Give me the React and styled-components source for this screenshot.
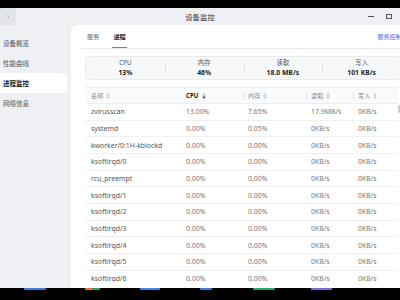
import React from "react";
import styled, { createGlobalStyle } from "styled-components";

const GlobalStyle = createGlobalStyle`
  * { box-sizing: border-box; }
  html, body {
    margin: 0;
    width: 400px;
    height: 300px;
    overflow: hidden;
    background: #000;
    font-family: "Noto Sans", "Noto Sans CJK SC", sans-serif;
  }
`;

const Screen = styled.div`
  width: 400px;
  height: 300px;
  display: flex;
  flex-direction: column;
  background: #000;
  overflow: hidden;
`;

const TopStrip = styled.div`
  height: 8px;
  flex: none;
`;

const Window = styled.div`
  height: 280px;
  flex: none;
  display: flex;
  flex-direction: column;
  background: #eef0f4;
`;

const TitleBar = styled.div`
  height: 17px;
  flex: none;
  display: grid;
  grid-template-columns: 1fr auto 1fr;
  align-items: center;
`;

const BackButton = styled.div`
  width: 16px;
  height: 17px;
  background: #e2e5ea;
  display: flex;
  align-items: center;
  justify-content: center;
`;

const Title = styled.div`
  font-size: 7.3px;
  color: #333;
  letter-spacing: 0.1px;
`;

const Controls = styled.div`
  justify-self: end;
  display: flex;
  align-items: center;
  gap: 12px;
  padding-right: 8px;
`;

const Minimize = styled.span`
  width: 6px;
  height: 1px;
  background: #555;
`;

const Maximize = styled.span`
  width: 6px;
  height: 5px;
  border: 1px solid #555;
`;

const Body = styled.div`
  flex: 1;
  display: flex;
  min-height: 0;
`;

const Sidebar = styled.div`
  width: 71px;
  flex: none;
  padding-top: 8px;
  display: flex;
  flex-direction: column;
`;

const NavItem = styled.div`
  width: 67px;
  height: 20px;
  display: flex;
  align-items: center;
  padding-left: 3px;
  font-size: 6.5px;
  color: ${(p) => (p.$active ? "#222" : "#555")};
  font-weight: ${(p) => (p.$active ? 600 : 400)};
  background: ${(p) => (p.$active ? "#fff" : "transparent")};
  border-radius: 0 4px 4px 0;
`;

const Panel = styled.div`
  flex: 1;
  background: #fff;
  border-top-left-radius: 6px;
  display: flex;
  flex-direction: column;
  overflow: hidden;
  padding-bottom: 6px;
`;

const TabBar = styled.div`
  height: 24px;
  flex: none;
  margin-left: 10px;
  padding-left: 5px;
  display: flex;
  align-items: stretch;
  gap: 12px;
  border-bottom: 1px solid #e9eaee;
  white-space: nowrap;
`;

const Tab = styled.div`
  position: relative;
  display: flex;
  align-items: center;
  padding: 0 1px;
  font-size: 6.2px;
  color: ${(p) => (p.$active ? "#222" : "#666")};
  font-weight: ${(p) => (p.$active ? 600 : 400)};
  &::after {
    content: "";
    display: ${(p) => (p.$active ? "block" : "none")};
    position: absolute;
    left: 0;
    right: 0;
    bottom: 0;
    height: 1.5px;
    background: #5b7cf5;
  }
`;

const Link = styled.div`
  margin-left: auto;
  margin-right: -2px;
  display: flex;
  align-items: center;
  font-size: 6.2px;
  color: #5a6cf0;
`;

const Content = styled.div`
  flex: 1;
  min-height: 0;
  padding: 7px 0 0 14px;
  display: flex;
  flex-direction: column;
  gap: 7px;
`;

const StatsBox = styled.div`
  width: 317px;
  height: 24px;
  flex: none;
  display: grid;
  grid-template-columns: repeat(4, 1fr);
  background: #f7f8fa;
  border: 1px solid #e8eaee;
  border-radius: 4px;
`;

const Stat = styled.div`
  position: relative;
  display: flex;
  flex-direction: column;
  align-items: center;
  justify-content: center;
  line-height: 10px;
  & + &::before {
    content: "";
    position: absolute;
    left: 0;
    top: 6px;
    height: 9px;
    width: 1px;
    background: #dfe1e6;
  }
`;

const StatLabel = styled.span`
  font-size: 6.3px;
  color: #555;
`;

const StatValue = styled.span`
  font-size: 6.8px;
  font-weight: 700;
  color: #222;
`;

const TableWrap = styled.div`
  flex: 1;
  min-height: 0;
  display: flex;
  overflow: hidden;
`;

const Table = styled.div`
  width: 313px;
  flex: none;
  display: flex;
  flex-direction: column;
`;

const Scrollbar = styled.div`
  width: 2px;
  flex: none;
  display: flex;
  flex-direction: column;
  padding-top: 18px;
`;

const Thumb = styled.div`
  height: 8px;
  background: #c9ccd2;
  border-radius: 1px;
`;

const cols = "96px 62px 63px 47px 45px";

const HeadRow = styled.div`
  height: 17px;
  flex: none;
  display: grid;
  grid-template-columns: ${cols};
  align-items: center;
  background: #f9fafb;
  border-top: 1px solid #eceef1;
  border-bottom: 1px solid #eceef1;
`;

const HeadCell = styled.div`
  position: relative;
  display: flex;
  align-items: center;
  gap: 3px;
  padding-left: ${(p) => (p.$first ? 6 : 5)}px;
  font-size: 6.2px;
  color: ${(p) => (p.$active ? "#222" : "#888")};
  font-weight: ${(p) => (p.$active ? 700 : 400)};
  &::before {
    content: "";
    display: ${(p) => (p.$divider ? "block" : "none")};
    position: absolute;
    left: 0;
    top: 1px;
    height: 9px;
    width: 1px;
    background: #e3e5e9;
  }
`;

const Row = styled.div`
  height: 16.67px;
  flex: none;
  display: grid;
  grid-template-columns: ${cols};
  align-items: center;
  border-bottom: 1px solid #eef0f2;
`;

const Cell = styled.div`
  padding-left: ${(p) => (p.$first ? 6 : 5)}px;
  font-size: 6.9px;
  color: ${(p) => (p.$first ? "#555" : "#777")};
  white-space: nowrap;
  overflow: hidden;
`;

const Taskbar = styled.div`
  flex: 1;
  position: relative;
  overflow: hidden;
`;

const TaskIcon = styled.span`
  position: absolute;
  top: 0;
  height: 2px;
  border-radius: 1px 1px 0 0;
`;

const SortIcon = ({ active }) => (
  <svg width="4" height="6" viewBox="0 0 4 6">
    <path d="M2 0 L4 2.4 L0 2.4 Z" fill={active ? "#bbb" : "#c8c8c8"} />
    <path d="M0 3.6 L4 3.6 L2 6 Z" fill={active ? "#555" : "#c8c8c8"} />
  </svg>
);

const Chevron = () => (
  <svg width="4" height="6" viewBox="0 0 4 6">
    <path d="M1 1 L3 3 L1 5" fill="none" stroke="#a9adb5" strokeWidth="0.8" />
  </svg>
);

const procs = [
  ["zvirusscan", "13.00%", "7.65%", "17.9MB/s", "0KB/s"],
  ["systemd", "0.00%", "0.05%", "0KB/s", "0KB/s"],
  ["kworker/0:1H-kblockd", "0.00%", "0.00%", "0KB/s", "0KB/s"],
  ["ksoftirqd/0", "0.00%", "0.00%", "0KB/s", "0KB/s"],
  ["rcu_preempt", "0.00%", "0.00%", "0KB/s", "0KB/s"],
  ["ksoftirqd/1", "0.00%", "0.00%", "0KB/s", "0KB/s"],
  ["ksoftirqd/2", "0.00%", "0.00%", "0KB/s", "0KB/s"],
  ["ksoftirqd/3", "0.00%", "0.00%", "0KB/s", "0KB/s"],
  ["ksoftirqd/4", "0.00%", "0.00%", "0KB/s", "0KB/s"],
  ["ksoftirqd/5", "0.00%", "0.00%", "0KB/s", "0KB/s"],
  ["ksoftirqd/6", "0.00%", "0.00%", "0KB/s", "0KB/s"],
];

const stats = [
  ["CPU", "13%"],
  ["内存", "46%"],
  ["读取", "18.0 MB/s"],
  ["写入", "101 KB/s"],
];

const taskIcons = [
  { left: 24, width: 22, color: "#3d7be0" },
  { left: 85, width: 8, color: "#e0762e" },
  { left: 93, width: 7, color: "#2aa85a" },
  { left: 140, width: 20, color: "#3f86e6" },
  { left: 200, width: 12, color: "#3d7be0" },
  { left: 253, width: 22, color: "#22a86a" },
  { left: 311, width: 21, color: "#7c6bd6" },
];

export default function App() {
  return (
    <Screen>
      <GlobalStyle />
      <TopStrip />
      <Window>
        <TitleBar>
          <BackButton>
            <Chevron />
          </BackButton>
          <Title>设备监控</Title>
          <Controls>
            <Minimize />
            <Maximize />
          </Controls>
        </TitleBar>
        <Body>
          <Sidebar>
            <NavItem>设备概览</NavItem>
            <NavItem>性能曲线</NavItem>
            <NavItem $active>进程监控</NavItem>
            <NavItem>网络信息</NavItem>
          </Sidebar>
          <Panel>
            <TabBar>
              <Tab>服务</Tab>
              <Tab $active>进程</Tab>
              <Link>服务控制</Link>
            </TabBar>
            <Content>
              <StatsBox>
                {stats.map(([label, value]) => (
                  <Stat key={label}>
                    <StatLabel>{label}</StatLabel>
                    <StatValue>{value}</StatValue>
                  </Stat>
                ))}
              </StatsBox>
              <TableWrap>
                <Table>
                  <HeadRow>
                    <HeadCell $first>
                      名称 <SortIcon />
                    </HeadCell>
                    <HeadCell $active>
                      CPU <SortIcon active />
                    </HeadCell>
                    <HeadCell $divider>
                      内存 <SortIcon />
                    </HeadCell>
                    <HeadCell $divider>
                      读取 <SortIcon />
                    </HeadCell>
                    <HeadCell $divider>
                      写入 <SortIcon />
                    </HeadCell>
                  </HeadRow>
                  {procs.map((p) => (
                    <Row key={p[0]}>
                      {p.map((v, i) => (
                        <Cell key={i} $first={i === 0}>
                          {v}
                        </Cell>
                      ))}
                    </Row>
                  ))}
                </Table>
                <Scrollbar>
                  <Thumb />
                </Scrollbar>
              </TableWrap>
            </Content>
          </Panel>
        </Body>
      </Window>
      <Taskbar>
        {taskIcons.map((t, i) => (
          <TaskIcon
            key={i}
            style={{ left: t.left, width: t.width, background: t.color }}
          />
        ))}
      </Taskbar>
    </Screen>
  );
}
